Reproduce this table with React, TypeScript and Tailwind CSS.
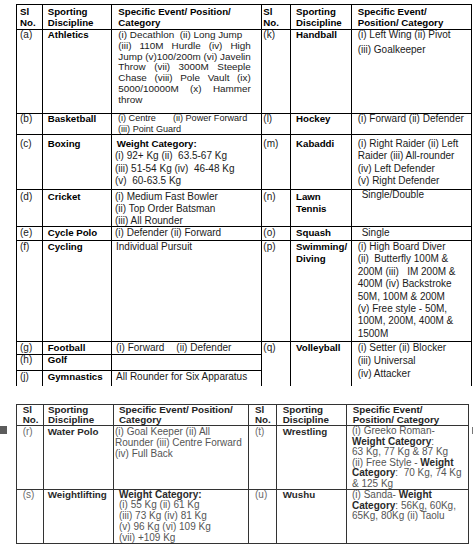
import React from "react";

type CP = { c: string; m?: string; children?: React.ReactNode };

const Cell = ({ c, m, children }: CP) => (
  <div className={c}>{m ? <div className={m}>{children}</div> : children}</div>
);

const A = "border-r border-b border-black whitespace-pre ";
const AL = "border-r border-black whitespace-pre ";
const B = "border-r border-b border-[#333] whitespace-pre ";
const H1 = "font-bold text-[9.7px] leading-[11px] pt-[0.5px] text-black ";
const H2 = "font-bold text-[9.8px] leading-[10px] text-[#222] ";
const BD = "font-bold text-[9.7px] text-black ";

const just: string[][] = [
  ["(iii)", "110M", "Hurdle", "(iv)", "High"],
  ["Jump", "(v)100/200m", "(vi)", "Javelin"],
  ["Throw", "(vii)", "3000M", "Steeple"],
  ["Chase", "(viii)", "Pole", "Vault", "(ix)"],
  ["5000/10000M", "(x)", "Hammer"],
];

export default function App() {
  return (
    <div className="w-[473px] h-[549px] bg-white overflow-hidden font-['Liberation_Sans',Arial,sans-serif] text-[10px] text-[#1a1a1a]">
      <div className="pt-[4px] pl-[16px]">
        <div className="grid w-[456px] grid-cols-[26px_69px_150px_29px_61px_120px] grid-rows-[25px_84px_21px_55px_37px_14px_101px_13px_16px_15px] border-l border-t border-black">
          {/* header */}
          <Cell c={A + H1 + "pl-[3px]"}><div>Sl</div><div>No.</div></Cell>
          <Cell c={A + H1 + "pl-[4.7px]"}><div>Sporting</div><div>Discipline</div></Cell>
          <Cell c={A + H1 + "pl-[6.3px]"}><div>Specific Event/ Position/</div><div>Category</div></Cell>
          <Cell c={A + H1 + "pl-[1.3px]"}><div>Sl</div><div>No.</div></Cell>
          <Cell c={A + H1 + "pl-[5px]"}><div>Sporting</div><div>Discipline</div></Cell>
          <Cell c={A + H1 + "pl-[5.7px]"}><div>Specific Event/</div><div>Position/ Category</div></Cell>

          {/* athletics / handball */}
          <Cell c={A + "pl-[3px] leading-[10.8px]"}>(a)</Cell>
          <Cell c={A + BD + "pl-[4.7px] leading-[10.8px]"}>Athletics</Cell>
          <Cell c={A + "pl-[6.3px] leading-[10.8px] text-[9.9px]"}>
            <div>(i) Decathlon  (ii) Long Jump</div>
            {just.map((ws, i) => (
              <div key={i} className="flex justify-between w-[132.5px]">
                {ws.map((w, j) => (
                  <span key={j}>{w}</span>
                ))}
              </div>
            ))}
            <div>throw</div>
          </Cell>
          <Cell c={A + "pl-[1.3px]"} m="-mt-[1px] leading-[11px]">(k)</Cell>
          <Cell c={A + BD + "pl-[5px]"} m="-mt-[1px] leading-[11px]">Handball</Cell>
          <Cell c={A + "pl-[5.7px]"} m="-mt-[3px] leading-[15px]">
            <div>(i) Left Wing (ii) Pivot</div>
            <div>(iii) Goalkeeper</div>
          </Cell>

          {/* basketball / hockey */}
          <Cell c={A + "pl-[3px]"} m="-mt-[1.5px] leading-[12.5px]">(b)</Cell>
          <Cell c={A + BD + "pl-[4.7px]"} m="-mt-[1.5px] leading-[12.5px]">Basketball</Cell>
          <Cell c={A + "pl-[6px] text-[9.1px]"} m="-mt-[1.5px] leading-[11.5px]">
            <div>(i) Centre<span className="ml-[17px]">(ii) Power Forward</span></div>
            <div>(iii) Point Guard</div>
          </Cell>
          <Cell c={A + "pl-[1.3px]"} m="-mt-[1.5px] leading-[12.5px]">(l)</Cell>
          <Cell c={A + BD + "pl-[5px]"} m="-mt-[1.5px] leading-[12.5px]">Hockey</Cell>
          <Cell c={A + "pl-[5.7px]"} m="-mt-[1.5px] leading-[12.5px]">(i) Forward (ii) Defender</Cell>

          {/* boxing / kabaddi */}
          <Cell c={A + "pl-[3px] pt-[2.7px] leading-[12.6px]"}>(c)</Cell>
          <Cell c={A + BD + "pl-[4.7px] pt-[2.7px] leading-[12.6px]"}>Boxing</Cell>
          <Cell c={A + "pl-[3px] pt-[2.7px] leading-[12.6px]"}>
            <div className="pl-[1.7px] font-bold text-[9.7px] text-black">Weight Category:</div>
            <div>(i) 92+ Kg (ii)  63.5-67 Kg</div>
            <div>(iii) 51-54 Kg (iv)  46-48 Kg</div>
            <div>(v)  60-63.5 Kg</div>
          </Cell>
          <Cell c={A + "pl-[1.3px] pt-[2.7px] leading-[12.6px]"}>(m)</Cell>
          <Cell c={A + BD + "pl-[5px] pt-[2.7px] leading-[12.6px]"}>Kabaddi</Cell>
          <Cell c={A + "pl-[5.7px] pt-[2.7px] leading-[12.6px]"}>
            <div>(i) Right Raider (ii) Left</div>
            <div>Raider (iii) All-rounder</div>
            <div>(iv) Left Defender</div>
            <div>(v) Right Defender</div>
          </Cell>

          {/* cricket / lawn tennis */}
          <Cell c={A + "pl-[3px] pt-[0.5px] leading-[12.2px]"}>(d)</Cell>
          <Cell c={A + BD + "pl-[4.7px] pt-[0.5px] leading-[12.2px]"}>Cricket</Cell>
          <Cell c={A + "pl-[3px] pt-[0.5px] leading-[12.2px]"}>
            <div>(i) Medium Fast Bowler</div>
            <div>(ii) Top Order Batsman</div>
            <div>(iii) All Rounder</div>
          </Cell>
          <Cell c={A + "pl-[1.3px] pt-[0.5px] leading-[12.2px]"}>(n)</Cell>
          <Cell c={A + BD + "pl-[5px] pt-[0.5px] leading-[12.2px]"}>
            <div>Lawn</div>
            <div>Tennis</div>
          </Cell>
          <Cell c={A + "pl-[9.7px] leading-[10px]"}>Single/Double</Cell>

          {/* cycle polo / squash */}
          <Cell c={A + "pl-[3px] leading-[12px]"}>(e)</Cell>
          <Cell c={A + BD + "pl-[4.7px] leading-[12px]"}>Cycle Polo</Cell>
          <Cell c={A + "pl-[3px] leading-[12px]"}>(i) Defender (ii) Forward</Cell>
          <Cell c={A + "pl-[1.3px] leading-[12px]"}>(o)</Cell>
          <Cell c={A + BD + "pl-[5px] leading-[12px]"}>Squash</Cell>
          <Cell c={A + "pl-[9.7px] leading-[12px]"}>Single</Cell>

          {/* cycling / swimming */}
          <Cell c={A + "pl-[3px] leading-[12.4px]"}>(f)</Cell>
          <Cell c={A + BD + "pl-[4.7px] leading-[12.4px]"}>Cycling</Cell>
          <Cell c={A + "pl-[4px] leading-[12.4px]"}>Individual Pursuit</Cell>
          <Cell c={A + "pl-[1.3px] leading-[12.4px]"}>(p)</Cell>
          <Cell c={A + BD + "pl-[5px] leading-[12.4px]"}>
            <div>Swimming/</div>
            <div>Diving</div>
          </Cell>
          <Cell c={A + "pl-[5.7px] leading-[12.4px]"}>
            <div>(i) High Board Diver</div>
            <div>(ii)  Butterfly 100M &amp;</div>
            <div>200M (iii)   IM 200M &amp;</div>
            <div>400M (iv) Backstroke</div>
            <div>50M, 100M &amp; 200M</div>
            <div>(v) Free style - 50M,</div>
            <div>100M, 200M, 400M &amp;</div>
            <div>1500M</div>
          </Cell>

          {/* football / volleyball */}
          <Cell c={A + "pl-[3px] leading-[11px]"}>(g)</Cell>
          <Cell c={A + BD + "pl-[4.7px] leading-[11px]"}>Football</Cell>
          <Cell c={A + "pl-[4px] leading-[11px]"}>
            (i) Forward<span className="ml-[12px]">(ii) Defender</span>
          </Cell>
          <Cell c={AL + "row-span-3 pl-[1.3px] leading-[12.8px]"}>(q)</Cell>
          <Cell c={AL + BD + "row-span-3 pl-[5px] leading-[12.8px]"}>Volleyball</Cell>
          <Cell c={AL + "row-span-3 pl-[5.7px] leading-[12.8px]"}>
            <div>(i) Setter (ii) Blocker</div>
            <div>(iii) Universal</div>
            <div>(iv) Attacker</div>
          </Cell>

          {/* golf */}
          <Cell c={A + "pl-[3px] leading-[10px]"}>(h)</Cell>
          <Cell c={A + BD + "pl-[4.7px] leading-[10px]"}>Golf</Cell>
          <Cell c={A} />

          {/* gymnastics */}
          <Cell c={AL + "pl-[3px] leading-[11px]"}>(j)</Cell>
          <Cell c={AL + BD + "pl-[4.7px] leading-[11px]"}>Gymnastics</Cell>
          <Cell c={AL + "pl-[4px] leading-[11px]"}>All Rounder for Six Apparatus</Cell>
        </div>
      </div>

      <div className="mt-[18px] flex items-start">
        <div className="mt-[21.7px] w-[7px] h-[8.3px] bg-[#5c5c5c]" />
        <div className="ml-[9px] grid w-[453px] grid-cols-[27px_70px_135px_28px_70px_122px] grid-rows-[21px_64px_54px] border-l border-t border-[#333] text-[#555]">
          {/* header */}
          <Cell c={B + H2 + "pl-[5.7px]"}><div>Sl</div><div>No.</div></Cell>
          <Cell c={B + H2 + "pl-[4px]"}><div>Sporting</div><div>Discipline</div></Cell>
          <Cell c={B + H2 + "pl-[5px]"}><div>Specific Event/ Position/</div><div>Category</div></Cell>
          <Cell c={B + H2 + "pl-[6px]"}><div>Sl</div><div>No.</div></Cell>
          <Cell c={B + H2 + "pl-[5.7px]"}><div>Sporting</div><div>Discipline</div></Cell>
          <Cell c={B + H2 + "pl-[5.7px]"}><div>Specific Event/</div><div>Position/ Category</div></Cell>

          {/* water polo / wrestling */}
          <Cell c={B + "pl-[5.7px] text-[#6a6a6a]"} m="-mt-[0.5px] leading-[11.3px]">(r)</Cell>
          <Cell c={B + "pl-[3.7px] font-bold text-[9.8px] text-[#2a2a2a]"} m="-mt-[0.5px] leading-[11.3px]">Water Polo</Cell>
          <Cell c={B + "pl-[1px]"} m="-mt-[0.5px] leading-[11.3px]">
            <div>(i) Goal Keeper (ii) All</div>
            <div>Rounder (iii) Centre Forward</div>
            <div>(iv) Full Back</div>
          </Cell>
          <Cell c={B + "pl-[6px] text-[#6a6a6a]"} m="-mt-[0.5px] leading-[11.3px]">(t)</Cell>
          <Cell c={B + "pl-[5.7px] font-bold text-[9.8px] text-[#2a2a2a]"} m="-mt-[0.5px] leading-[11.3px]">Wrestling</Cell>
          <Cell c={B + "pl-[5px] leading-[10.5px]"}>
            <div>(i) Greeko Roman-</div>
            <div><b className="text-[#2a2a2a]">Weight Category</b>:</div>
            <div>63 Kg, 77 Kg &amp; 87 Kg</div>
            <div>(ii) Free Style - <b className="text-[#2a2a2a]">Weight</b></div>
            <div><b className="text-[#2a2a2a]">Category</b>:  70 Kg, 74 Kg</div>
            <div>&amp; 125 Kg</div>
          </Cell>

          {/* weightlifting / wushu */}
          <Cell c={B + "pl-[5.7px] text-[#6a6a6a]"} m="-mt-[0.5px] leading-[10.9px]">(s)</Cell>
          <Cell c={B + "pl-[3.7px] font-bold text-[9.8px] text-[#2a2a2a]"} m="-mt-[0.5px] leading-[10.9px]">Weightlifting</Cell>
          <Cell c={B + "pl-[5px]"} m="-mt-[0.5px] leading-[10.9px]">
            <div className="font-bold text-[#2a2a2a]">Weight Category:</div>
            <div>(i) 55 Kg (ii) 61 Kg</div>
            <div>(iii) 73 Kg (iv) 81 Kg</div>
            <div>(v) 96 Kg (vi) 109 Kg</div>
            <div>(vii) +109 Kg</div>
          </Cell>
          <Cell c={B + "pl-[6px] text-[#6a6a6a]"} m="-mt-[0.5px] leading-[10.9px]">(u)</Cell>
          <Cell c={B + "pl-[5.7px] font-bold text-[9.8px] text-[#2a2a2a]"} m="-mt-[0.5px] leading-[10.9px]">Wushu</Cell>
          <Cell c={B + "pl-[5px] leading-[10.5px]"}>
            <div>(i) Sanda- <b className="text-[#2a2a2a]">Weight</b></div>
            <div><b className="text-[#2a2a2a]">Category</b>: 56Kg, 60Kg,</div>
            <div>65Kg, 80Kg (ii) Taolu</div>
          </Cell>
        </div>
        <div className="ml-[2.5px] mt-[22.7px] w-[1.5px] h-[7.3px] bg-[#777]" />
      </div>
    </div>
  );
}
